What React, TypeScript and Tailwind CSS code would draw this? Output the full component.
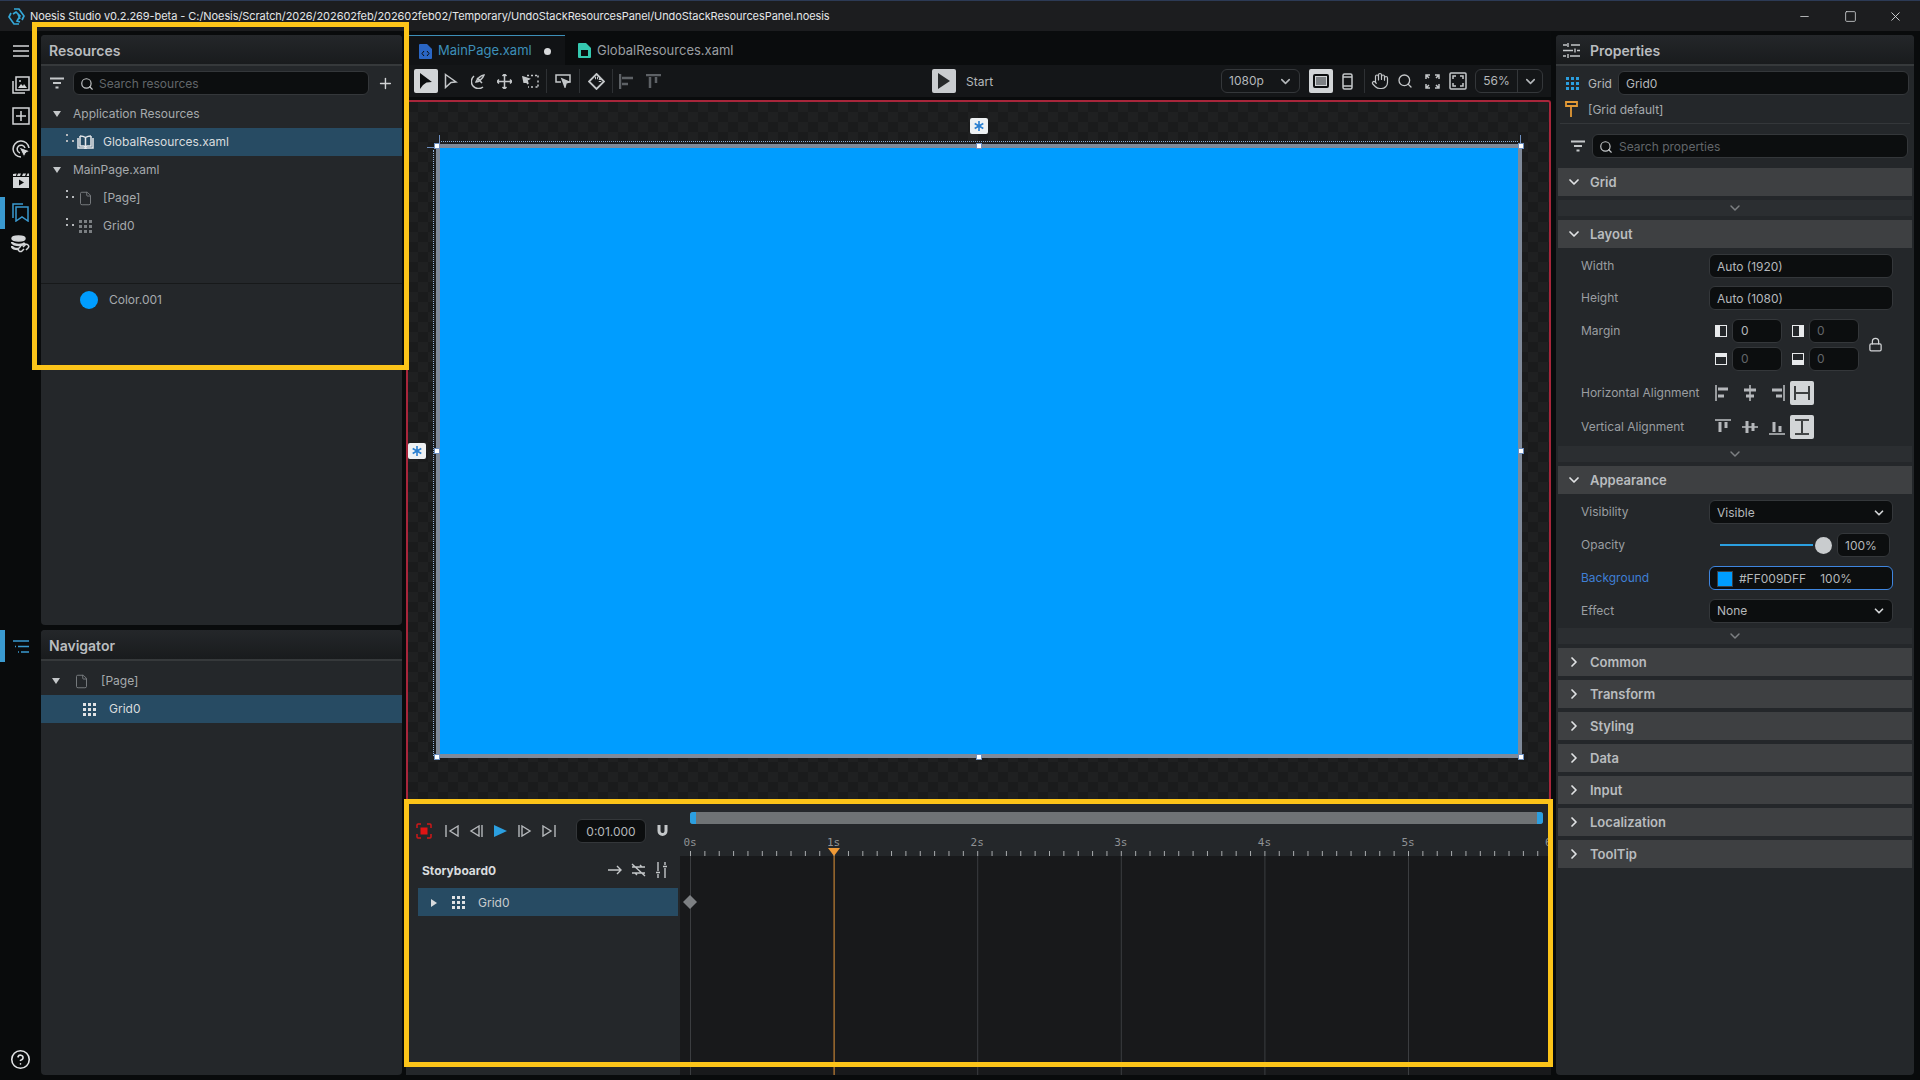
import React from 'react';
import { ChevronDown, ChevronRight, CircleHelp, File, Hand, Lock, Minus, Plus, Search, Square, X } from 'lucide-react';

type IconProps = { className?: string };

const Svg: React.FC<{ size?: number; box?: number; className?: string; children: React.ReactNode }> = ({ size = 20, box = 24, className = '', children }) => (
  <svg width={size} height={size} viewBox={`0 0 ${box} ${box}`} fill="none" stroke="currentColor" strokeWidth={2} className={className}>
    {children}
  </svg>
);

const FilterIcon = ({ className = '' }: IconProps) => (
  <Svg size={16} box={16} className={className} >
    <path d="M1 3.5h14M4 8h8M6.5 12.5h3" />
  </Svg>
);

const GridDots = ({ className = '' }: IconProps) => (
  <svg width="13" height="13" viewBox="0 0 13 13" fill="currentColor" className={className}>
    {[0, 5, 10].map((y) => [0, 5, 10].map((x) => <rect key={`${x}-${y}`} x={x} y={y} width="3" height="3" />))}
  </svg>
);

const TriDown = ({ className = '' }: IconProps) => (
  <svg width="10" height="8" viewBox="0 0 10 8" fill="currentColor" className={className}>
    <path d="M1 1h8L5 7z" />
  </svg>
);

const TreeDots = () => (
  <svg width="9" height="9" viewBox="0 0 9 9" fill="#b5b8bb" className="shrink-0 -mt-2">
    <rect x="0" y="0" width="2" height="2" />
    <rect x="0" y="6" width="2" height="2" />
    <rect x="6" y="6" width="2" height="2" />
  </svg>
);

const BookIcon = () => (
  <svg width="17" height="14" viewBox="0 0 17 14" fill="none" stroke="#e6e8ea" strokeWidth="1.5">
    <path d="M3 1v10h4l1.500 1.500L10 11h4V1" />
    <path d="M1 3v10h6l1.500 .5L10 13h6V3" />
    <path d="M8.500 2.500V12M3 1c2 0 4 .5 5.500 1.500C10 1.500 12 1 14 1" />
  </svg>
);

const TreeRow: React.FC<{ selected?: boolean; children: React.ReactNode; className?: string }> = ({ selected, children, className = '' }) => (
  <div className={`h-[28px] flex items-center text-[12px] ${selected ? 'bg-[#274b63] text-[#d9dcde]' : 'text-[#a6aaad]'} ${className}`}>
    {children}
  </div>
);

const PanelHeader: React.FC<{ title: string }> = ({ title }) => (
  <div className="h-[31px] shrink-0 flex items-center pl-[8px] pt-[1px] rounded-t-[4px] bg-gradient-to-b from-[#24272a] to-[#191b1d] border-b-2 border-[#36393b] text-[14px] font-semibold text-[#b9bcbf]">
    {title}
  </div>
);

const Rail = () => (
  <div className="w-[41px] shrink-0 relative flex flex-col items-center bg-[#090b0c] text-[#d4d6d8]">
    <svg width="16" height="12" viewBox="0 0 16 12" stroke="currentColor" strokeWidth="1.5" className="mt-[14px]">
      <path d="M0 1h16M0 6h16M0 11h16" />
    </svg>
    {/* gallery */}
    <svg width="18" height="18" viewBox="0 0 18 18" fill="none" stroke="currentColor" strokeWidth="1.5" className="mt-[19px]">
      <path d="M1 5v12h12" />
      <rect x="4" y="1" width="13" height="13" />
      <path d="M6 12l3-4 2 2 1-2 3 4z" fill="currentColor" stroke="none" />
      <circle cx="8" cy="5" r="1" fill="currentColor" stroke="none" />
    </svg>
    {/* add */}
    <svg width="18" height="18" viewBox="0 0 18 18" fill="none" stroke="currentColor" strokeWidth="1.5" className="mt-[13px]">
      <rect x="1" y="1" width="16" height="16" />
      <path d="M9 4v10M4 9h10" />
    </svg>
    {/* target */}
    <svg width="18" height="18" viewBox="0 0 18 18" fill="none" stroke="currentColor" strokeWidth="1.5" className="mt-[15px]">
      <path d="M9 17a8 8 0 1 1 8-9" />
      <path d="M8 13a4 4 0 1 1 5-5" />
      <path d="M7 7l11 4-4 2-2 4z" fill="currentColor" stroke="#090b0c" strokeWidth="1" />
    </svg>
    {/* clapper */}
    <svg width="18" height="15" viewBox="0 0 18 15" fill="currentColor" className="mt-[15px]">
      <path d="M1 1l3.5-.5L4 3H1zM6 .5h3L8 3H5zM11 .5h3l-1 2.5h-3zM15.5.5H17v2.5h-2.5z" />
      <path d="M1 4h16v11H1z" />
      <path d="M7 6.5l5 3-5 3z" fill="#090b0c" />
    </svg>
    {/* bookmarks */}
    <svg width="17" height="19" viewBox="0 0 17 19" fill="none" stroke="#3a9ad0" strokeWidth="1.5" className="mt-[15px]">
      <path d="M1 15V1h10" />
      <path d="M4 4h12v14l-6-4-6 4z" />
    </svg>
    {/* data */}
    <svg width="19" height="19" viewBox="0 0 19 19" fill="none" stroke="currentColor" strokeWidth="1.5" className="mt-[13px]">
      <ellipse cx="7.5" cy="3.5" rx="6.5" ry="2.5" fill="currentColor" />
      <path d="M1 7c0 2 4 3 7 3s5-.6 6-2M1 11c0 2 3 3 6 3" strokeWidth="2.4" />
      <path d="M12 12l2-2a2 2 0 0 1 3 3l-2 2M13 14l-2 2a2 2 0 0 1-3-3l2-2" />
    </svg>
    <div className="absolute left-0 top-[166px] w-[5px] h-[32px] bg-[#3a9ad0]" />
    <svg width="18" height="13" viewBox="0 0 18 13" stroke="#3a9ad0" strokeWidth="1.5" className="mt-[386px]">
      <path d="M1 1h16M3 6.500h1M6 6.500h11M6 12h1M9 12h8" />
    </svg>
    <div className="absolute left-0 top-[599px] w-[5px] h-[32px] bg-[#3a9ad0]" />
    <CircleHelp size={21} strokeWidth={1.8} className="mt-auto mb-[10px] text-[#e2e4e6]" />
  </div>
);

const LeftColumn = () => (
  <div className="w-[361px] shrink-0 flex flex-col gap-[5px] pt-[4px] pb-[5px]">
    <section className="h-[590px] shrink-0 rounded-[4px] bg-[#24272a]">
      <PanelHeader title="Resources" />
      <div className="h-[24px] mt-[5px] mb-[5px] flex items-center pl-[8px] pr-[8px]">
        <FilterIcon className="text-[#c4c7c9] shrink-0" />
        <div className="ml-[8px] w-[298px] h-[24px] rounded-[6px] bg-[#0c0e0f] border border-[#34373a] flex items-center pl-[6px] pt-[1px] text-[12px] text-[#62666a]">
          <Search size={14} strokeWidth={2} className="text-[#c4c7c9]" />
          <span className="ml-[5px]">Search resources</span>
        </div>
        <Plus size={17} strokeWidth={2} className="ml-[8px] text-[#d2d4d6]" />
      </div>
      <TreeRow>
        <TriDown className="ml-[11px] text-[#c4c7c9]" />
        <span className="ml-[11px]">Application Resources</span>
      </TreeRow>
      <TreeRow selected>
        <span className="ml-[25px] flex items-center">
          <TreeDots />
        </span>
        <span className="ml-[2px]"><BookIcon /></span>
        <span className="ml-[9px]">GlobalResources.xaml</span>
      </TreeRow>
      <TreeRow>
        <TriDown className="ml-[11px] text-[#c4c7c9]" />
        <span className="ml-[11px]">MainPage.xaml</span>
      </TreeRow>
      <TreeRow>
        <span className="ml-[25px]"><TreeDots /></span>
        <File size={15} strokeWidth={1.5} className="ml-[3px] text-[#7b7f82]" />
        <span className="ml-[10px]">[Page]</span>
      </TreeRow>
      <TreeRow>
        <span className="ml-[25px]"><TreeDots /></span>
        <GridDots className="ml-[4px] text-[#7b7f82]" />
        <span className="ml-[11px]">Grid0</span>
      </TreeRow>
      <div className="mt-[43px] h-[32px] border-t border-[#17191a] flex items-center text-[12px] text-[#a6aaad] box-content pt-[0px]">
        <span className="ml-[39px] w-[18px] h-[18px] rounded-full bg-[#009dff]" />
        <span className="ml-[11px]">Color.001</span>
      </div>
    </section>
    <section className="flex-1 rounded-[4px] bg-[#24272a]">
      <PanelHeader title="Navigator" />
      <TreeRow className="mt-[6px]">
        <TriDown className="ml-[10px] text-[#c4c7c9]" />
        <File size={15} strokeWidth={1.5} className="ml-[13px] text-[#7b7f82]" />
        <span className="ml-[12px]">[Page]</span>
      </TreeRow>
      <TreeRow selected>
        <GridDots className="ml-[42px] text-[#e0e2e4]" />
        <span className="ml-[13px]">Grid0</span>
      </TreeRow>
    </section>
  </div>
);

const Tabs = () => (
  <div className="h-[34px] shrink-0 flex items-end pl-[3px] bg-[#0a0c0d]">
    <div className="w-[156px] h-[30px] flex items-center pl-[10px] pt-[1px] bg-[#111315] border-t border-[#3d8fb8] text-[13px] text-[#3d8fb8]">
      <svg width="13" height="15" viewBox="0 0 13 15" className="shrink-0">
        <path d="M0 1a1 1 0 0 1 1-1h7l5 5v9a1 1 0 0 1-1 1H1a1 1 0 0 1-1-1z" fill="#2a66c4" />
        <path d="M5 7l-2 2.500 2 2.500M8 7l2 2.500-2 2.500" stroke="#0a0c0d" fill="none" />
      </svg>
      <span className="ml-[6px]">MainPage.xaml</span>
      <span className="ml-[12px] w-[7px] h-[7px] rounded-full bg-[#d8dadc]" />
    </div>
    <div className="h-[30px] flex items-center pl-[13px] pt-[1px] text-[13px] text-[#9a9ea1]">
      <svg width="13" height="15" viewBox="0 0 13 15" className="shrink-0">
        <path d="M0 1a1 1 0 0 1 1-1h7l5 5v9a1 1 0 0 1-1 1H1a1 1 0 0 1-1-1z" fill="#35c9b0" />
        <rect x="3" y="7" width="7" height="6" fill="#0a0c0d" />
      </svg>
      <span className="ml-[6px]">GlobalResources.xaml</span>
    </div>
  </div>
);

const ToolSlot: React.FC<{ className?: string; active?: boolean; children: React.ReactNode }> = ({ className = '', active, children }) => (
  <div className={`w-[24px] h-[24px] shrink-0 flex items-center justify-center ${active ? 'bg-[#d2d5d7] text-[#0c0e0f] rounded-[2px]' : 'text-[#c4c7c9]'} ${className}`}>
    {children}
  </div>
);

const ToolSep: React.FC<{ className?: string }> = ({ className = '' }) => <div className={`w-px h-[24px] shrink-0 bg-[#2e3134] ${className}`} />;

const Toolbar = () => (
  <div className="h-[32px] shrink-0 flex items-center bg-[#141618] text-[12px]">
    <ToolSlot active className="ml-[8px]">
      <svg width="14" height="16" viewBox="0 0 14 16" fill="currentColor"><path d="M1 0l12 9-5.500 .5L4 12l-3 4z" /></svg>
    </ToolSlot>
    <ToolSlot className="ml-[1px]">
      <svg width="14" height="16" viewBox="0 0 14 16" fill="none" stroke="currentColor" strokeWidth="1.5"><path d="M1.500 1.500l10.500 7.500-5 .5-5.500 5z" /></svg>
    </ToolSlot>
    <ToolSlot className="ml-[4px]">
      <svg width="16" height="16" viewBox="0 0 16 16" fill="none" stroke="currentColor" strokeWidth="1.5"><path d="M3 3a7 7 0 0 0 9 11M5 9c3 0 7-4 8-7-3 0-7 4-8 7zM6 5l5 5" /></svg>
    </ToolSlot>
    <ToolSlot className="ml-px">
      <svg width="15" height="15" viewBox="0 0 15 15" fill="none" stroke="currentColor" strokeWidth="1.500"><path d="M7.500 0v15M0 7.500h15M5.500 2l2-2 2 2M5.500 13l2 2 2-2M2 5.500l-2 2 2 2M13 5.500l2 2-2 2" /></svg>
    </ToolSlot>
    <ToolSlot className="ml-[2px]">
      <svg width="17" height="14" viewBox="0 0 17 14" fill="none" stroke="currentColor" strokeWidth="1.500"><path d="M5 1.500h2M9 1.500h2M13 1.500h3v3M16 6.500v2M16 10.500v2.500h-3M11 13H9M7 13H6" strokeDasharray="2 1" /><path d="M1 3l6 2-2 1 1 4-2-3-2 1z" fill="currentColor" /></svg>
    </ToolSlot>
    <ToolSep className="ml-[4px]" />
    <ToolSlot className="ml-[4px]">
      <svg width="16" height="14" viewBox="0 0 16 14" fill="none" stroke="currentColor" strokeWidth="1.500"><path d="M6 8H1V1h14v7h-3" /><path d="M7 5l7 3-3 1-1 4z" fill="currentColor" /></svg>
    </ToolSlot>
    <ToolSep className="ml-[4px]" />
    <ToolSlot className="ml-[4px]">
      <svg width="17" height="17" viewBox="0 0 17 17" fill="none" stroke="currentColor" strokeWidth="1.800"><path d="M8.500 1l7.500 7.500-7.500 7.500L1 8.500z" /><path d="M7 5h5v5" strokeWidth="2.500" strokeDasharray="1 1" /></svg>
    </ToolSlot>
    <ToolSep className="ml-[4px]" />
    <ToolSlot className="ml-px text-[#5d6165]">
      <svg width="15" height="15" viewBox="0 0 15 15" fill="none" stroke="#5d6165" strokeWidth="2"><path d="M1 0v15M3 4h11M3 10h6" strokeWidth="2.500" /></svg>
    </ToolSlot>
    <ToolSlot className="ml-[3px]">
      <svg width="15" height="15" viewBox="0 0 15 15" fill="none" stroke="#5d6165" strokeWidth="2"><path d="M0 1h15M4 3v11M10 3v6" strokeWidth="2.500" /></svg>
    </ToolSlot>
    <div className="ml-[267px] w-[24px] h-[24px] flex items-center justify-center bg-[#c9cccf] rounded-[2px] text-[#26292b]">
      <svg width="14" height="16" viewBox="0 0 14 16" fill="currentColor"><path d="M1 0l12 8-12 8z" /></svg>
    </div>
    <span className="ml-[10px] pt-[1px] text-[#b5b8bb]">Start</span>

    <div className="ml-auto w-[79px] h-[24px] rounded-[6px] border border-[#34373a] flex items-center pl-[7px] pr-[6px] text-[#b5b8bb]">
      1080p
      <ChevronDown size={15} strokeWidth={2.5} className="ml-auto" />
    </div>
    <ToolSlot active className="ml-[9px]">
      <svg width="16" height="14" viewBox="0 0 16 14" fill="none" stroke="currentColor" strokeWidth="2"><rect x="1" y="1" width="14" height="12" rx="1" /><rect x="3" y="3" width="10" height="8" fill="#7d8184" stroke="none" /></svg>
    </ToolSlot>
    <ToolSlot className="ml-[2px]">
      <svg width="11" height="17" viewBox="0 0 11 17" fill="none" stroke="currentColor" strokeWidth="1.500"><rect x="1" y="1" width="9" height="15" rx="1.500" /><path d="M1 4h9M1 13h9" /></svg>
    </ToolSlot>
    <ToolSep className="ml-[5px]" />
    <ToolSlot className="ml-[3px]"><Hand size={18} strokeWidth={1.6} /></ToolSlot>
    <ToolSlot className="ml-px"><Search size={16} strokeWidth={2} /></ToolSlot>
    <ToolSlot className="ml-[3px]">
      <svg width="15" height="15" viewBox="0 0 15 15" fill="none" stroke="currentColor" strokeWidth="1.500"><path d="M1 5V1h4M1 1l3 3M10 1h4v4M14 1l-3 3M1 10v4h4M1 14l3-3M14 10v4h-4M14 14l-3-3" /></svg>
    </ToolSlot>
    <ToolSlot className="ml-[2px]">
      <svg width="18" height="18" viewBox="0 0 18 18" fill="none" stroke="currentColor" strokeWidth="1.500"><rect x="1" y="1" width="16" height="16" rx="1" /><path d="M4 7V4h3M14 7V4h-3M4 11v3h3M14 11v3h-3" /></svg>
    </ToolSlot>
    <div className="ml-[5px] mr-[8px] w-[68px] h-[24px] rounded-[6px] border border-[#34373a] flex items-center text-[#b5b8bb]">
      <span className="w-[42px] text-center border-r border-[#34373a] leading-[22px]">56%</span>
      <ChevronDown size={15} strokeWidth={2.5} className="ml-[5px]" />
    </div>
  </div>
);

const handleSpots = [
  'left-[26px] top-[41px]',
  'left-[568px] top-[41px]',
  'left-[1110px] top-[41px]',
  'left-[26px] top-[346px]',
  'left-[1110px] top-[346px]',
  'left-[26px] top-[652px]',
  'left-[568px] top-[652px]',
  'left-[1110px] top-[652px]',
];

const StarBadge: React.FC<{ className: string }> = ({ className }) => (
  <div className={`absolute w-[18px] h-[16px] rounded-[2px] bg-[#eef1f3] flex items-center justify-center ${className}`}>
    <svg width="10" height="10" viewBox="0 0 10 10" stroke="#2a7fd0" strokeWidth="1.600"><path d="M5 0v10M0.700 2.500l8.600 5M9.300 2.500l-8.600 5" /></svg>
  </div>
);

const Canvas = () => (
  <div className="h-[700px] mt-[3px] shrink-0 relative overflow-hidden rounded-t-[3px] border-2 border-b-0 border-[#a8263b] bg-[repeating-conic-gradient(#1f2021_0_25%,#1a1b1c_0_50%)] bg-[length:20px_20px]">
    <div className="ml-[28px] mt-[42px] w-[1086px] h-[614px] border-[4px] border-[#7f8a9a] bg-[#009dff]" />
    <div className="absolute left-[33px] right-[31px] top-[39px] border-t border-dotted border-[#8fb0d8]" />
    <div className="absolute top-[48px] bottom-[44px] left-[25px] border-l border-dotted border-[#8fb0d8]" />
    <div className="absolute left-[31px] top-[33px] w-px h-[8px] bg-[#6d8fc0]" />
    <div className="absolute left-[1112px] top-[33px] w-px h-[8px] bg-[#6d8fc0]" />
    <div className="absolute left-[19px] top-[45px] w-[10px] h-px bg-[#6d8fc0]" />
    {handleSpots.map((spot) => (
      <div key={spot} className={`absolute w-[6px] h-[6px] bg-white border border-[#6d8fc0] ${spot}`} />
    ))}
    <StarBadge className="left-[562px] top-[16px]" />
    <StarBadge className="left-[0px] top-[341px]" />
  </div>
);

const seconds = [0, 1, 2, 3, 4, 5, 6];
const SEC = 143.6;

const PlayBtn: React.FC<{ d: string; className?: string }> = ({ d, className = '' }) => (
  <svg width="14" height="12" viewBox="0 0 14 12" fill="none" stroke="#b5b8bb" strokeWidth="1.400" className={className}>
    <path d={d} />
  </svg>
);

const Timeline = () => (
  <div className="flex-1 flex bg-[#24272a] text-[12px] overflow-hidden">
    <div className="w-[274px] shrink-0 flex flex-col">
      <div className="mt-[19px] h-[24px] flex items-center">
        <svg width="16" height="16" viewBox="0 0 16 16" fill="none" stroke="#d01818" strokeWidth="1.500" className="ml-[10px]">
          <path d="M1 5V2a1 1 0 0 1 1-1h3M11 1h3a1 1 0 0 1 1 1v3M1 11v3a1 1 0 0 0 1 1h3M11 15h3a1 1 0 0 0 1-1v-3" />
          <rect x="4.500" y="4.500" width="7" height="7" fill="#e01414" stroke="none" />
        </svg>
        <PlayBtn d="M1 0v12M13 1L5 6l8 5z" className="ml-[13px]" />
        <PlayBtn d="M13 0v12M10 1L2 6l8 5z" className="ml-[10px]" />
        <svg width="13" height="12" viewBox="0 0 13 12" fill="#2b9fe0" className="ml-[11px]"><path d="M0 0l13 6-13 6z" /></svg>
        <PlayBtn d="M1 0v12M4 1l8 5-8 5z" className="ml-[11px]" />
        <PlayBtn d="M13 0v12M1 1l8 5-8 5z" className="ml-[10px]" />
        <div className="ml-[20px] w-[70px] h-[24px] rounded-[6px] bg-[#0c0e0f] border border-[#34373a] flex items-center justify-center pt-[1px] text-[#b5b8bb]">
          0:01.000
        </div>
        <svg width="11" height="12" viewBox="0 0 11 12" fill="none" stroke="#c4c7c9" strokeWidth="3" className="ml-[11px]">
          <path d="M2 0v6a3.500 3.500 0 0 0 7 0V0" />
        </svg>
      </div>
      <div className="mt-[15px] h-[24px] flex items-center">
        <span className="ml-[16px] pt-[1px] font-bold text-[#d9dcde]">Storyboard0</span>
        <svg width="14" height="10" viewBox="0 0 14 10" fill="none" stroke="#c4c7c9" strokeWidth="1.400" className="ml-[112px]"><path d="M0 5h13M9 1l4 4-4 4" /></svg>
        <svg width="15" height="14" viewBox="0 0 15 14" fill="none" stroke="#c4c7c9" strokeWidth="1.400" className="ml-[9px]"><path d="M1 4h10l-2-2M14 10H4l2 2M1 1l13 12M1 10h3M11 4h3" /></svg>
        <svg width="11" height="16" viewBox="0 0 11 16" fill="none" stroke="#c4c7c9" strokeWidth="1.400" className="ml-[10px]"><path d="M2 0v9M2 12v4M9 0v3M9 6v10M0 10.500h4M7 4.500h4" /></svg>
      </div>
      <div className="mt-[6px] ml-[12px] w-[260px] h-[28px] bg-[#274b63] flex items-center pt-[1px] text-[#c9ccce]">
        <svg width="8" height="10" viewBox="0 0 8 10" fill="#d8dadc" className="ml-[12px]"><path d="M1 1l6 4-6 4z" /></svg>
        <GridDots className="ml-[14px] text-[#e0e2e4]" />
        <span className="ml-[13px]">Grid0</span>
      </div>
    </div>

    <div className="flex-1 relative overflow-hidden flex flex-col">
      <div className="h-[56px] shrink-0">
        <div className="mt-[12px] ml-[10px] mr-[8px] h-[12px] rounded-[3px] bg-[#6f7375] flex justify-between">
          <span className="w-[6px] bg-[#2b9fe0] rounded-l-[3px]" />
          <span className="w-[6px] bg-[#2b9fe0] rounded-r-[3px]" />
        </div>
      </div>
      <div className="flex-1 bg-[#18191b]" />
      {/* ruler and tracks are a drawing of time, placed by their seconds */}
      <svg width="872" height="275" className="absolute left-0 top-0">
        {Array.from({ length: 61 }, (_, i) => (
          <line key={i} x1={10.5 + i * (SEC / 10)} x2={10.5 + i * (SEC / 10)} y1={51} y2={56} stroke="#a8abad" />
        ))}
        {seconds.slice(0, 6).map((s) => (
          <line key={s} x1={10.5 + s * SEC} x2={10.5 + s * SEC} y1={56} y2={275} stroke={s === 1 ? '#e3953a' : '#3b3d40'} />
        ))}
        <path d="M148 48h12l-6 8z" fill="#f09a36" />
        <path d="M10 95l7 7-7 7-7-7z" fill="#7d8083" />
      </svg>
      {seconds.map((s) => (
        <span
          key={s}
          className="absolute top-[35px] -translate-x-1/2 font-['DejaVu_Sans_Mono',monospace] text-[11px] text-[#8f9295]"
          style={{ left: 10 + s * SEC }}
        >
          {s}s
        </span>
      ))}
    </div>
  </div>
);

const SectionHeader: React.FC<{ title: string; open?: boolean }> = ({ title, open }) => (
  <div className="h-[28px] shrink-0 flex items-center bg-[#3e4042] text-[13px] font-semibold text-[#b9bcbf] mx-[2px]">
    {open
      ? <ChevronDown size={16} strokeWidth={2.6} className="ml-[8px] text-[#e0e2e4]" />
      : <ChevronRight size={16} strokeWidth={2.6} className="ml-[8px] text-[#e0e2e4]" />}
    <span className="ml-[8px] pt-[1px]">{title}</span>
  </div>
);

const Strip: React.FC<{ className?: string }> = ({ className = '' }) => (
  <div className={`h-[16px] shrink-0 mx-[2px] bg-[#2b2e31] flex items-center justify-center text-[#7d8083] ${className}`}>
    <ChevronDown size={16} strokeWidth={2.2} />
  </div>
);

const Field: React.FC<{ className?: string; dim?: boolean; children?: React.ReactNode }> = ({ className = '', dim, children }) => (
  <div className={`h-[24px] rounded-[6px] bg-[#0c0e0f] border border-[#34373a] flex items-center text-[12px] ${dim ? 'text-[#62666a]' : 'text-[#b5b8bb]'} ${className}`}>
    {children}
  </div>
);

const PropRow: React.FC<{ label: string; className?: string; labelClass?: string; children: React.ReactNode }> = ({ label, className = '', labelClass = 'text-[#9a9ea1]', children }) => (
  <div className={`h-[24px] flex items-center text-[12px] ${className}`}>
    <span className={`w-[128px] ml-[25px] shrink-0 ${labelClass}`}>{label}</span>
    {children}
  </div>
);

const SideBox: React.FC<{ fill: string }> = ({ fill }) => (
  <svg width="12" height="12" viewBox="0 0 12 12" className="shrink-0">
    <rect x="0.500" y="0.500" width="11" height="11" fill="#24272a" stroke="#e8eaec" />
    <path d={fill} fill="#e8eaec" />
  </svg>
);

const AlignIcon: React.FC<{ line: string; bars: string; active?: boolean; className?: string }> = ({ line, bars, active, className = '' }) => (
  <div className={`w-[24px] h-[24px] shrink-0 flex items-center justify-center ${active ? 'bg-[#d2d5d7] text-[#16181a] rounded-[2px]' : 'text-[#b5b8bb]'} ${className}`}>
    <svg width="16" height="16" viewBox="0 0 16 16" fill="none" stroke="currentColor">
      <path d={line} strokeWidth="1.600" />
      <path d={bars} strokeWidth={active ? 1.6 : 3} />
    </svg>
  </div>
);

const Properties = () => (
  <div className="w-[358px] ml-[5px] shrink-0 mt-[4px] mb-[5px] rounded-[4px] bg-[#24272a] flex flex-col">
    <div className="h-[31px] shrink-0 flex items-center pt-[1px] rounded-t-[4px] bg-gradient-to-b from-[#24272a] to-[#191b1d] border-b-2 border-[#36393b] text-[14px] font-semibold text-[#b9bcbf]">
      <svg width="17" height="17" viewBox="0 0 17 17" fill="none" stroke="#c4c7c9" strokeWidth="1.400" className="ml-[7px]">
        <path d="M0 3h4M8 3h9M0 8.500h10M14 8.500h3M0 14h3M7 14h10M5 1v4M12 6.500v4M5 12v4" />
      </svg>
      <span className="ml-[10px]">Properties</span>
    </div>
    <div className="mt-[5px] h-[24px] flex items-center text-[12px] text-[#b5b8bb]">
      <GridDots className="ml-[10px] text-[#2b9fe0]" />
      <span className="ml-[9px] pt-[1px]">Grid</span>
      <Field className="ml-[6px] w-[291px] pl-[7px] pt-[1px]">Grid0</Field>
    </div>
    <div className="mt-[2px] h-[24px] flex items-center text-[12px] text-[#a6aaad]">
      <svg width="13" height="16" viewBox="0 0 13 16" fill="none" stroke="#e39a36" strokeWidth="1.800" className="ml-[9px]">
        <path d="M1 1h11v4H1zM6 5v3M6 8v8" />
      </svg>
      <span className="ml-[10px] pt-[1px]">[Grid default]</span>
    </div>
    <div className="mx-[4px] mt-[2px] border-t border-[#34373a]" />
    <div className="mt-[10px] mb-[10px] h-[24px] flex items-center">
      <FilterIcon className="ml-[14px] text-[#c4c7c9]" />
      <Field dim className="ml-[6px] w-[316px] pl-[6px] pt-[1px]">
        <Search size={14} strokeWidth={2} className="text-[#c4c7c9]" />
        <span className="ml-[6px]">Search properties</span>
      </Field>
    </div>

    <SectionHeader open title="Grid" />
    <Strip className="my-[4px]" />
    <SectionHeader open title="Layout" />
    <div className="flex flex-col gap-[8px] pt-[6px]">
      <PropRow label="Width"><Field className="w-[184px] pl-[7px] pt-[1px]">Auto (1920)</Field></PropRow>
      <PropRow label="Height"><Field className="w-[184px] pl-[7px] pt-[1px]">Auto (1080)</Field></PropRow>
    </div>
    <div className="relative mt-[9px] h-[51px] flex flex-col gap-[4px] text-[12px]">
      <div className="h-[24px] flex items-center">
        <span className="ml-[25px] w-[134px] text-[#9a9ea1]">Margin</span>
        <SideBox fill="M1 1h4v10H1z" />
        <Field className="ml-[5px] w-[50px] pl-[8px]">0</Field>
        <span className="ml-[10px]"><SideBox fill="M7 1h4v10H7z" /></span>
        <Field dim className="ml-[5px] w-[50px] pl-[7px]">0</Field>
      </div>
      <div className="h-[24px] flex items-center">
        <span className="ml-[159px]"><SideBox fill="M1 1h10v3H1z" /></span>
        <Field dim className="ml-[5px] w-[50px] pl-[8px]">0</Field>
        <span className="ml-[10px]"><SideBox fill="M1 7h10v4H1z" /></span>
        <Field dim className="ml-[5px] w-[50px] pl-[7px]">0</Field>
      </div>
      <Lock size={15} strokeWidth={2} className="absolute left-[312px] top-[18px] text-[#d2d4d6]" />
    </div>
    <div className="mt-[11px] flex flex-col gap-[10px]">
      <PropRow label="Horizontal Alignment">
        <AlignIcon line="M1 0v16" bars="M3 4h10M3 11h6" className="ml-[2px]" />
        <AlignIcon line="M8 0v16" bars="M2 5h12M4 11h8" className="ml-[3px]" />
        <AlignIcon line="M15 0v16" bars="M3 5h10M7 11h6" className="ml-[3px]" />
        <AlignIcon active line="M1 1v14M15 1v14" bars="M2 8h12" className="ml-[1px]" />
      </PropRow>
      <PropRow label="Vertical Alignment">
        <AlignIcon line="M0 1h16" bars="M5 3v10M11 3v6" className="ml-[2px]" />
        <AlignIcon line="M0 8h16" bars="M5 2v12M11 4v8" className="ml-[3px]" />
        <AlignIcon line="M0 15h16" bars="M5 3v10M11 7v6" className="ml-[3px]" />
        <AlignIcon active line="M1 1h14M1 15h14" bars="M8 2v12" className="ml-[1px]" />
      </PropRow>
    </div>
    <Strip className="mt-[7px]" />
    <div className="mt-[4px]"><SectionHeader open title="Appearance" /></div>
    <div className="flex flex-col gap-[9px] pt-[6px]">
      <PropRow label="Visibility">
        <Field className="w-[184px] pl-[7px] pr-[6px] pt-[1px] justify-between">Visible<ChevronDown size={14} strokeWidth={3} className="text-[#d2d4d6]" /></Field>
      </PropRow>
      <PropRow label="Opacity">
        <div className="ml-[11px] w-[93px] h-[2px] bg-[#2b9fe0]" />
        <div className="ml-[2px] w-[17px] h-[17px] rounded-full bg-[#c9ccce]" />
        <Field className="ml-[5px] w-[53px] pl-[7px] pt-[1px]">100%</Field>
      </PropRow>
      <PropRow label="Background" labelClass="text-[#3f7fd6]">
        <div className="w-[184px] h-[24px] rounded-[6px] bg-[#0c0e0f] border border-[#3f86e0] flex items-center pt-[1px] text-[12px] text-[#b5b8bb]">
          <span className="ml-[7px] w-[16px] h-[16px] bg-[#009dff] border border-[#3a4046]" />
          <span className="ml-[6px]">#FF009DFF</span>
          <span className="ml-[14px]">100%</span>
        </div>
      </PropRow>
      <PropRow label="Effect">
        <Field className="w-[184px] pl-[7px] pr-[6px] justify-between">None<ChevronDown size={14} strokeWidth={3} className="text-[#d2d4d6]" /></Field>
      </PropRow>
    </div>
    <Strip className="mt-[5px]" />
    <div className="mt-[4px] flex flex-col gap-[4px]">
      {['Common', 'Transform', 'Styling', 'Data', 'Input', 'Localization', 'ToolTip'].map((name) => (
        <SectionHeader key={name} title={name} />
      ))}
    </div>
  </div>
);

const App: React.FC = () => (
  <div className="relative w-[1920px] h-[1080px] overflow-hidden flex flex-col bg-[#090b0c] font-['Inter',sans-serif]">
    <div className="h-[31px] shrink-0 flex items-center bg-[#1c1d1f] border-t border-[#2c3a55] text-[11px] tracking-[-0.07px] text-[#e4e6e8]">
      <svg width="17" height="17" viewBox="0 0 17 17" fill="none" stroke="#35a8d8" strokeWidth="1.700" className="ml-[8px]">
        <path d="M6 1h5l5 7-2 4M11 16H6L1 9l2-4" />
        <path d="M5 6l3-2 4 4-3 5 3 1M12 11l-2-5" />
      </svg>
      <span className="ml-[5px]">Noesis Studio v0.2.269-beta - C:/Noesis/Scratch/2026/202602feb/202602feb02/Temporary/UndoStackResourcesPanel/UndoStackResourcesPanel.noesis</span>
      <Minus size={13} strokeWidth={1.5} className="ml-auto text-[#d2d4d6]" />
      <Square size={13} strokeWidth={1.5} className="ml-[33px] text-[#d2d4d6]" />
      <X size={15} strokeWidth={1.5} className="ml-[31px] mr-[17px] text-[#d2d4d6]" />
    </div>
    <div className="flex-1 flex min-h-0">
      <Rail />
      <LeftColumn />
      <main className="w-[1145px] ml-[4px] shrink-0 flex flex-col pb-[5px]">
        <Tabs />
        <Toolbar />
        <Canvas />
        <Timeline />
      </main>
      <Properties />
    </div>
    {/* yellow callouts drawn over the screenshot */}
    <div className="absolute left-[32px] top-[22px] w-[377px] h-[348px] border-[5px] border-[#fcc419] pointer-events-none" />
    <div className="absolute left-[404px] top-[799px] w-[1149px] h-[268px] border-[5px] border-[#fcc419] pointer-events-none" />
  </div>
);

export default App;
